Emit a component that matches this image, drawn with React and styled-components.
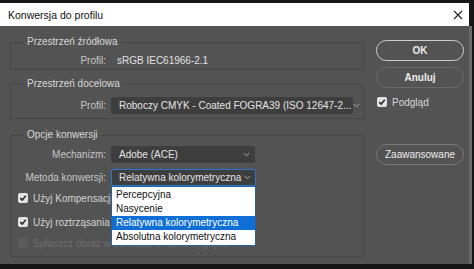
import styled, { createGlobalStyle } from "styled-components";

const GlobalStyle = createGlobalStyle`
    body {
        margin: 0;
        background: #161616;
        font-family: "Liberation Sans", Arial, sans-serif;
    }
`;

const Check = () => (
    <svg width="8" height="8" viewBox="0 0 8 8">
        <path d="M1.3 4.2 L3.2 6 L6.8 1.8" fill="none" stroke="#2a2a2a" strokeWidth="1.6" />
    </svg>
);

const Chevron = () => (
    <svg width="7" height="5" viewBox="0 0 7 5">
        <path d="M0.8 1 L3.5 3.8 L6.2 1" fill="none" stroke="#a8a8a8" strokeWidth="1" />
    </svg>
);

const App = () => {
    const methods = ["Percepcyjna", "Nasycenie", "Relatywna kolorymetryczna", "Absolutna kolorymetryczna"];

    return (
        <Screen>
            <GlobalStyle />
            <Dialog>
                <TitleBar>
                    <Title>Konwersja do profilu</Title>
                    <svg width="10" height="10" viewBox="0 0 10 10">
                        <path d="M1 1 L9 9 M9 1 L1 9" stroke="#222" strokeWidth="1.1" />
                    </svg>
                </TitleBar>
                <Body>
                    <Main>
                        <Group $bottom={1}>
                            <Legend>Przestrzeń źródłowa</Legend>
                            <FieldRow>
                                <FieldLabel>Profil:</FieldLabel>
                                <Value>sRGB IEC61966-2.1</Value>
                            </FieldRow>
                        </Group>

                        <Group $top={8} $bottom={4}>
                            <Legend>Przestrzeń docelowa</Legend>
                            <FieldRow $pad={7}>
                                <FieldLabel>Profil:</FieldLabel>
                                <Select $width={242}>
                                    <span>Roboczy CMYK - Coated FOGRA39 (ISO 12647-2...</span>
                                    <Chevron />
                                </Select>
                            </FieldRow>
                        </Group>

                        <Group $top={10} $bottom={4}>
                            <Legend>Opcje konwersji</Legend>
                            <FieldRow $pad={5}>
                                <FieldLabel>Mechanizm:</FieldLabel>
                                <Select $width={144}>
                                    <span>Adobe (ACE)</span>
                                    <Chevron />
                                </Select>
                            </FieldRow>
                            <FieldRow $pad={6}>
                                <FieldLabel>Metoda konwersji:</FieldLabel>
                                <SelectWrap>
                                    <Select $width={145} $focused>
                                        <span>Relatywna kolorymetryczna</span>
                                        <Chevron />
                                    </Select>
                                    <Menu>
                                        {methods.map((m) => (
                                            <MenuItem key={m} $active={m === "Relatywna kolorymetryczna"}>
                                                {m}
                                            </MenuItem>
                                        ))}
                                    </Menu>
                                </SelectWrap>
                            </FieldRow>
                            <CheckRow $top={3}>
                                <Box><Check /></Box>
                                Użyj Kompensacji punktu czerni
                            </CheckRow>
                            <CheckRow $top={6}>
                                <Box><Check /></Box>
                                Użyj roztrząsania
                            </CheckRow>
                            <CheckRow $top={3} $disabled>
                                <Box $disabled />
                                Spłaszcz obraz w celu zachowania wyglądu
                            </CheckRow>
                        </Group>
                    </Main>

                    <Side>
                        <PillButton $primary>OK</PillButton>
                        <PillButton $top={6}>Anuluj</PillButton>
                        <SideCheck>
                            <Box><Check /></Box>
                            Podgląd
                        </SideCheck>
                        <PillButton $top={35} $light>Zaawansowane</PillButton>
                    </Side>
                </Body>
            </Dialog>
        </Screen>
    );
};

const Screen = styled.div`
    padding-top: 3px;
    height: 266px;
`;

const Dialog = styled.div`
    width: 472px;
    display: flex;
    flex-direction: column;
`;

const TitleBar = styled.div`
    width: 469px;
    height: 23px;
    background: #ffffff;
    display: flex;
    align-items: center;
    justify-content: space-between;
    padding: 0 6px 0 8px;
    box-sizing: border-box;
`;

const Title = styled.span`
    font-size: 10.5px;
    color: #111;
`;

const Body = styled.div`
    height: 238px;
    background: #535353;
    display: flex;
    gap: 12px;
    padding: 10px 5px 0 10px;
    box-sizing: border-box;
    border-right: 3px solid #6a6a6a;
`;

const Main = styled.div`
    width: 354px;
    display: flex;
    flex-direction: column;
`;

const Group = styled.fieldset`
    margin: ${(p) => p.$top || 0}px 0 0 0;
    padding: 0 6px ${(p) => p.$bottom ?? 5}px 5px;
    border: 1px solid #464646;
    min-width: 0;
`;

const Legend = styled.legend`
    margin-left: 8px;
    padding: 0 3px;
    font-size: 10px;
    line-height: 12px;
    color: #d8d8d8;
`;

const FieldRow = styled.div`
    display: grid;
    grid-template-columns: 90px auto;
    column-gap: 5px;
    align-items: center;
    margin-top: ${(p) => p.$pad ?? 4}px;
    min-height: 16px;
`;

const FieldLabel = styled.span`
    text-align: right;
    font-size: 10px;
    color: #c6c6c6;
    white-space: nowrap;
`;

const Value = styled.span`
    padding-left: 6px;
    font-size: 10px;
    color: #e2e2e2;
`;

const SelectWrap = styled.div`
    position: relative;
`;

const Select = styled.div`
    width: ${(p) => p.$width}px;
    height: 17px;
    box-sizing: border-box;
    background: #3e3e3e;
    border: 1px solid ${(p) => (p.$focused ? "#2b76d2" : "#3e3e3e")};
    border-radius: 2px;
    display: flex;
    align-items: center;
    justify-content: space-between;
    gap: 2px;
    padding: 0 4px 0 7px;
    font-size: 10px;
    color: #e4e4e4;
    white-space: nowrap;

    span {
        flex: none;
    }

    svg {
        flex-shrink: 0;
    }
`;

const Menu = styled.div`
    position: absolute;
    top: 17px;
    left: 0;
    width: 145px;
    box-sizing: border-box;
    background: #ffffff;
    border: 1px solid #2a5f9e;
    padding: 1px 0;
    z-index: 2;
`;

const MenuItem = styled.div`
    height: 14px;
    line-height: 14px;
    padding-left: 4px;
    font-size: 10px;
    color: ${(p) => (p.$active ? "#ffffff" : "#111")};
    background: ${(p) => (p.$active ? "#0f6fd6" : "transparent")};
    white-space: nowrap;
`;

const CheckRow = styled.div`
    display: flex;
    align-items: center;
    gap: 5px;
    height: 18px;
    margin-top: ${(p) => p.$top ?? 4}px;
    padding-left: 2px;
    font-size: 10px;
    color: ${(p) => (p.$disabled ? "#6e6e6e" : "#d4d4d4")};
    white-space: nowrap;
`;

const Box = styled.span`
    width: 10px;
    height: 10px;
    border-radius: 2px;
    background: ${(p) => (p.$disabled ? "#5c5c5c" : "#e2e2e2")};
    display: flex;
    align-items: center;
    justify-content: center;
    flex-shrink: 0;
`;

const Side = styled.div`
    width: 88px;
    display: flex;
    flex-direction: column;
    padding-top: 4px;
`;

const PillButton = styled.div`
    margin-top: ${(p) => p.$top || 0}px;
    height: 21px;
    box-sizing: border-box;
    border-radius: 11px;
    border: 1.5px solid ${(p) => (p.$primary ? "#cfcfcf" : p.$light ? "#7a7a7a" : "#6a6a6a")};
    display: flex;
    align-items: center;
    justify-content: center;
    font-size: 10px;
    font-weight: ${(p) => (p.$light ? 400 : 600)};
    color: #ececec;
`;

const SideCheck = styled.div`
    display: flex;
    align-items: center;
    gap: 5px;
    height: 14px;
    margin-top: 7px;
    padding-left: 1px;
    font-size: 10px;
    color: #d8d8d8;
`;

export default App;
